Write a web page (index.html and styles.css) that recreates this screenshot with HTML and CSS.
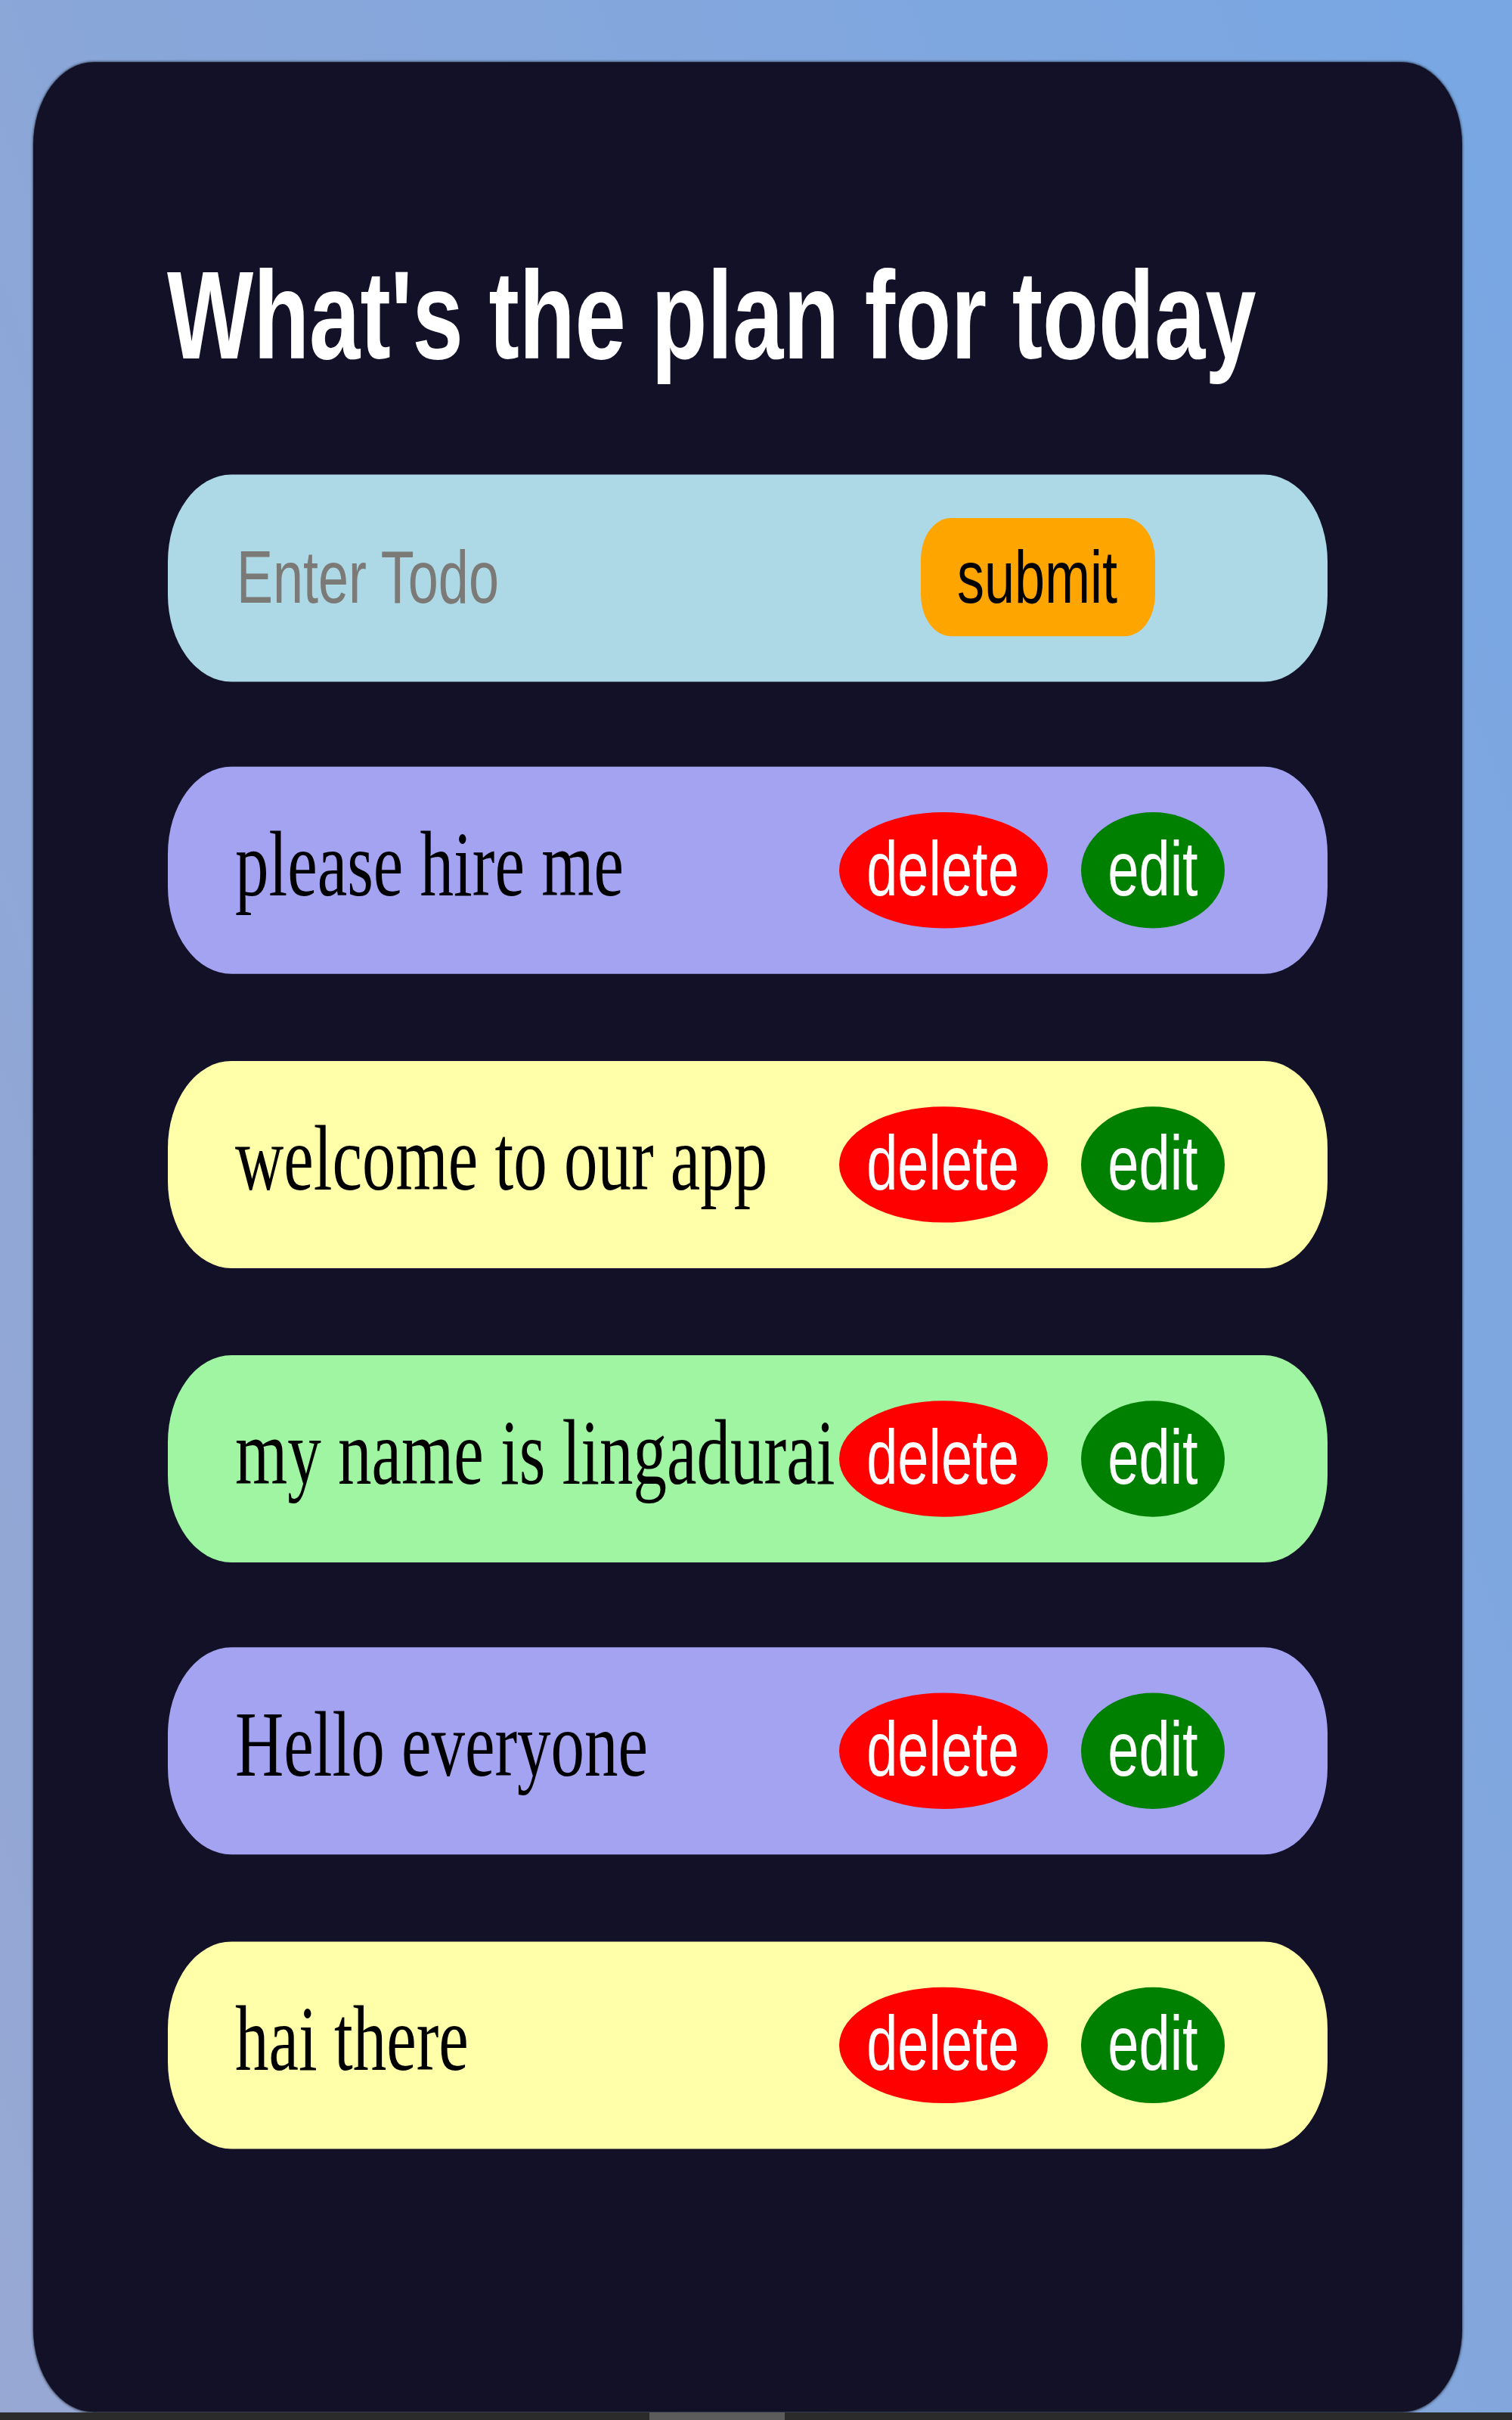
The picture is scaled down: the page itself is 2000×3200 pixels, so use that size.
FILE: index.html
```html
<!DOCTYPE html>
<html lang="en">
<head>
<meta charset="utf-8">
<title>Todo App</title>
<link rel="stylesheet" href="styles.css">
</head>
<body>
<div class="viewport">
  <div class="stage">
    <div class="card">
      <h1 class="title">What's the plan for today</h1>
      <div class="list">
        <form class="todo-form">
          <input class="todo-input" type="text" placeholder="Enter Todo">
          <button class="btn btn-submit" type="button">submit</button>
        </form>
        <div class="todo todo-purple">
          <span class="todo-text">please hire me</span>
          <button class="btn btn-delete" type="button">delete</button>
          <button class="btn btn-edit" type="button">edit</button>
        </div>
        <div class="todo todo-yellow">
          <span class="todo-text">welcome to our app</span>
          <button class="btn btn-delete" type="button">delete</button>
          <button class="btn btn-edit" type="button">edit</button>
        </div>
        <div class="todo todo-green">
          <span class="todo-text">my name is lingadurai</span>
          <button class="btn btn-delete" type="button">delete</button>
          <button class="btn btn-edit" type="button">edit</button>
        </div>
        <div class="todo todo-purple">
          <span class="todo-text">Hello everyone</span>
          <button class="btn btn-delete" type="button">delete</button>
          <button class="btn btn-edit" type="button">edit</button>
        </div>
        <div class="todo todo-yellow">
          <span class="todo-text">hai there</span>
          <button class="btn btn-delete" type="button">delete</button>
          <button class="btn btn-edit" type="button">edit</button>
        </div>
      </div>
    </div>
  </div>
</div>
<div class="scrollbar"><div class="scrollbar-thumb"></div></div>
</body>
</html>
```

FILE: styles.css
```css
html, body {
  margin: 0;
  padding: 0;
}

body {
  width: 2000px;
  height: 3200px;
  overflow: hidden;
  background: linear-gradient(70deg, #97a8d3 0%, #88a6d9 45%, #78a7e3 100%);
  font-family: "Liberation Sans", Arial, sans-serif;
}

.viewport {
  height: 3190px;
  overflow: hidden;
}

/* The UI is laid out at its natural size and stretched like the captured screen */
.stage {
  width: 1000px;
  padding: 30px 0 0 21.5px;
  box-sizing: border-box;
  transform: scale(2, 2.74);
  transform-origin: 0 0;
}

.card {
  width: 945px;
  height: 1134px;
  box-sizing: border-box;
  padding: 92px 89px 0 89px;
  background: #121127;
  border-radius: 40px;
  box-shadow: 0 0 1.5px rgba(0, 0, 0, 0.9);
}

.title {
  margin: 0 0 45.5px;
  font-family: "Liberation Sans", Arial, sans-serif;
  font-weight: bold;
  font-size: 60.5px;
  line-height: 61px;
  color: #ffffff;
  white-space: nowrap;
}

.list {
  display: flex;
  flex-direction: column;
  gap: 41.7px;
}

.todo-form,
.todo {
  height: 100px;
  border-radius: 42px;
  display: flex;
  align-items: center;
  box-sizing: border-box;
  margin: 0;
}

.todo-form {
  background: #add8e6;
  padding-left: 46px;
}

.todo-input {
  flex: none;
  width: 452px;
  border: 0;
  padding: 0;
  margin: 0;
  background: transparent;
  outline: none;
  font-family: "Liberation Sans", Arial, sans-serif;
  font-size: 36px;
  color: #000;
}

.todo-input::placeholder {
  color: #7c7a76;
}

.btn {
  flex: none;
  border: 0;
  margin: 0;
  display: flex;
  align-items: center;
  justify-content: center;
  font-family: "Liberation Sans", Arial, sans-serif;
  cursor: pointer;
}

.btn-submit {
  width: 155px;
  height: 57.7px;
  padding: 0;
  border-radius: 20px;
  background: #ffa500;
  font-size: 36px;
  color: #000;
}

.todo {
  padding-left: 45px;
}

.todo-purple { background: #a4a3f2; }
.todo-yellow { background: #ffffaa; }
.todo-green  { background: #a0f5a2; }

.todo-text {
  flex: none;
  width: 399px;
  margin-bottom: 6px;
  font-family: "Liberation Serif", "Times New Roman", serif;
  font-size: 44.5px;
  color: #000;
  white-space: nowrap;
}

.btn-delete,
.btn-edit {
  height: 56px;
  padding: 0;
  border-radius: 50%;
  font-size: 37px;
  color: #ffffff;
}

.btn-delete {
  width: 138px;
  background: #ff0000;
}

.btn-edit {
  width: 95px;
  margin-left: 22.5px;
  background: #008000;
}

.scrollbar {
  height: 10px;
  background: #2b2b2b;
  display: flex;
  padding-left: 859px;
}

.scrollbar-thumb {
  width: 179px;
  background: #5c5c5c;
}
```
